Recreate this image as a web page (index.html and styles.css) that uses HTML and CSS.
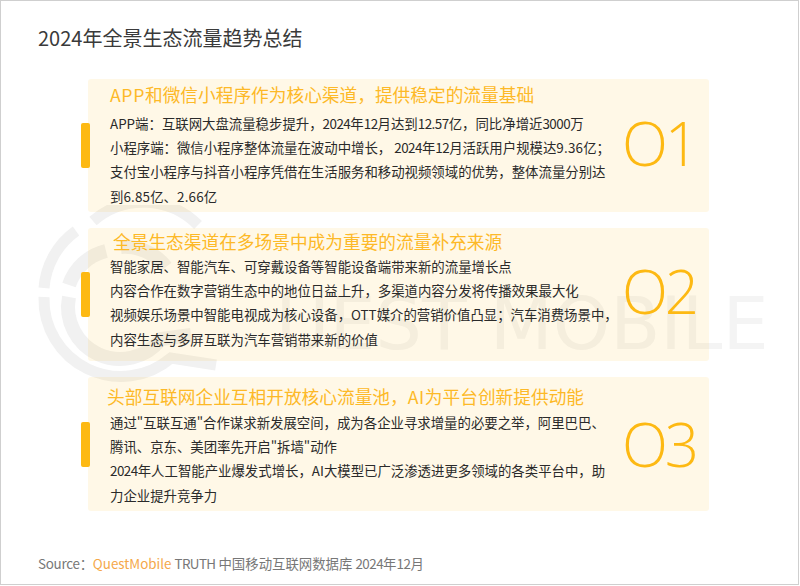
FILE: index.html
```html
<!DOCTYPE html>
<html lang="zh">
<head>
<meta charset="utf-8">
<title>2024年全景生态流量趋势总结</title>
<link rel="stylesheet" href="styles.css">
</head>
<body>
<main class="frame">
  <div class="watermark" aria-hidden="true">
    <svg class="wm-logo" width="220" height="190" viewBox="0 0 220 190" fill="none" stroke="#f1f1f1" stroke-linecap="butt">
      <path d="M13 83 A77 77 0 0 1 45 26" stroke-width="11"/>
      <path d="M62 16 A77 77 0 0 1 167 20" stroke-width="11"/>
      <path d="M13 92 A77 77 0 0 0 140 153 L185 160" stroke-width="11"/>
      <path d="M38 92 A52 52 0 0 0 130 134 L160 130" stroke-width="14"/>
      <path d="M38 80 A52 52 0 0 1 75 46" stroke-width="14"/>
      <path d="M90 42 A52 52 0 0 1 135 62" stroke-width="14"/>
    </svg>
    <span class="wm-text">UEST MOBILE</span>
  </div>
  <h1 class="title">2024年全景生态流量趋势总结</h1>
  <div class="cards">
    <section class="row row-a">
      <div class="marker"></div>
      <div class="card">
        <div class="body">
          <h2 class="head"><span class="lat">APP</span>和微信小程序作为核心渠道，提供稳定的流量基础</h2>
          <p><span class="lat">APP</span>端：互联网大盘流量稳步提升，<span class="dig">2024</span>年<span class="dig">12</span>月达到<span class="dig">12.57</span>亿，同比净增近<span class="dig">3000</span>万</p>
          <p>小程序端：微信小程序整体流量在波动中增长， <span class="dig">2024</span>年<span class="dig">12</span>月活跃用户规模达<span class="wide">9.36</span>亿；</p>
          <p>支付宝小程序与抖音小程序凭借在生活服务和移动视频领域的优势，整体流量分别达<br>到<span class="wide">6.85</span>亿、<span class="wide">2.66</span>亿</p>
        </div>
        <div class="num">O1</div>
      </div>
    </section>
    <section class="row row-b">
      <div class="marker"></div>
      <div class="card">
        <div class="body">
          <h2 class="head">全景生态渠道在多场景中成为重要的流量补充来源</h2>
          <p>智能家居、智能汽车、可穿戴设备等智能设备端带来新的流量增长点</p>
          <p>内容合作在数字营销生态中的地位日益上升，多渠道内容分发将传播效果最大化</p>
          <p>视频娱乐场景中智能电视成为核心设备，OTT媒介的营销价值凸显；汽车消费场景中，<br>内容生态与多屏互联为汽车营销带来新的价值</p>
        </div>
        <div class="num">O2</div>
      </div>
    </section>
    <section class="row row-c">
      <div class="marker"></div>
      <div class="card">
        <div class="body">
          <h2 class="head">头部互联网企业互相开放核心流量池，<span class="lat">AI</span>为平台创新提供动能</h2>
          <p>通过"互联互通"合作谋求新发展空间，成为各企业寻求增量的必要之举，阿里巴巴、<br>腾讯、京东、美团率先开启"拆墙"动作</p>
          <p><span class="dig">2024</span>年人工智能产业爆发式增长，<span class="lat">AI</span>大模型已广泛渗透进更多领域的各类平台中，助<br>力企业提升竞争力</p>
        </div>
        <div class="num">O3</div>
      </div>
    </section>
  </div>
  <footer class="source"><span class="src">Source：</span><span class="brand">QuestMobile</span> <span class="truth">TRUTH</span> 中国移动互联网数据库 <span class="dig">2024</span>年<span class="dig">12</span>月</footer>
</main>
</body>
</html>
```
FILE: styles.css
```css
* { box-sizing: border-box; margin: 0; padding: 0; }
html, body { width: 800px; height: 586px; overflow: hidden; background: #fff; }
body { font-family: "Noto Sans CJK SC", sans-serif; }
.frame {
  position: relative;
  width: 799px;
  height: 585px;
  border: 1px solid #cfcfcf;
  padding: 24px 0 0 37px;
  display: flex;
  flex-direction: column;
  overflow: hidden;
}
.watermark { position: absolute; left: 0; top: 0; width: 797px; height: 583px; }
.wm-logo { position: absolute; left: 30px; top: 204px; }
.wm-text {
  position: absolute; left: 275px; top: 279px;
  font-family: "DejaVu Sans", sans-serif;
  font-size: 73px; line-height: 88px; font-weight: 400; color: #f4f4f4; white-space: nowrap;
}
.title { position: relative; font-size: 20px; line-height: 26px; font-weight: 400; color: #3a3a3a; }
.cards { position: relative; display: flex; flex-direction: column; gap: 16px; margin-top: 28px; }
.row { position: relative; margin-left: 50px; width: 621px; }
.marker {
  position: absolute; left: -7px; top: 44px; width: 9px; height: 45px;
  background: #fdb913; border-radius: 2px;
}
.card {
  height: 133px; background: rgba(253, 185, 19, .1); border-radius: 3px;
  display: flex; align-items: flex-start; padding-left: 22px;
}
.row-a .card { padding-top: 3px; }
.row-b .card { padding-top: 1px; }
.row-c .card { padding-top: 7px; height: 134px; }
.row-a .head { margin-bottom: 5px; }
.row-b .head { margin-bottom: 1px; margin-left: 3px; }
.row-c .head { margin-bottom: 2px; margin-left: -3px; }
.row-c .marker { top: 45px; }
.body { width: 512px; flex: none; }
.head { font-size: 17.7px; line-height: 24px; font-weight: 400; color: #fdb927; white-space: nowrap; }
.head .lat { letter-spacing: .6px; }
.body p { font-size: 13.4px; line-height: 24.2px; color: #2a2a2a; white-space: nowrap; }
.dig { letter-spacing: -.5px; }
.wide { letter-spacing: .2px; }
.num {
  font-family: "Open Sans", sans-serif;
  font-size: 60px; font-weight: 300; line-height: 1; letter-spacing: -3px; color: #fdb913;
  align-self: center; position: relative; top: -4px;
}
.source { position: absolute; left: 37px; top: 553px; font-size: 13.4px; line-height: 18px; color: #777; }
.src { letter-spacing: -.25px; }
.truth { letter-spacing: -.6px; }
.brand { color: #f5a84a; }
```
